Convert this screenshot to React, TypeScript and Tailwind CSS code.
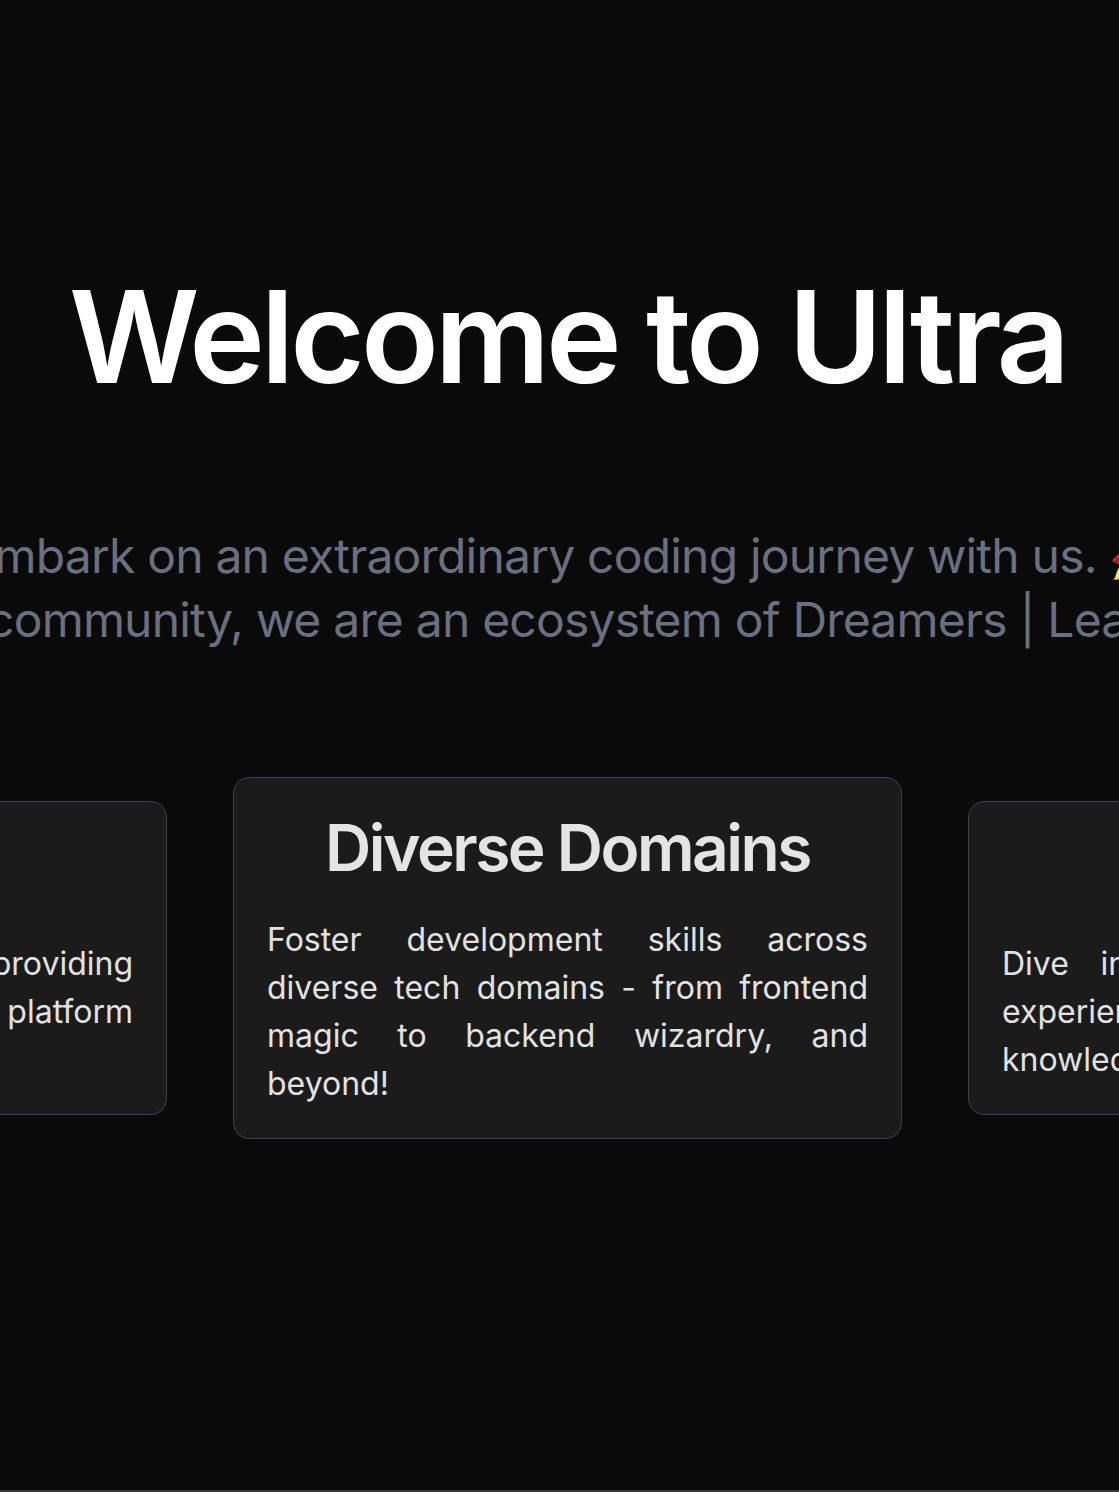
const CARDS = [
  {
    title: "Mentors",
    lines: [
      "Mentors and peers always providing",
      "guidance on a supportive platform",
      "to learn and grow.",
    ],
  },
  {
    title: "Diverse Domains",
    lines: [
      "Foster development skills across",
      "diverse tech domains - from frontend",
      "magic to backend wizardry, and",
      "beyond!",
    ],
  },
  {
    title: "Projects",
    lines: [
      "Dive into real-world projects, gain",
      "experience and share your hard-won",
      "knowledge with others.",
    ],
  },
];

function Card({ title, lines }: { title: string; lines: string[] }) {
  return (
    <div className="w-[669px] shrink-0 rounded-2xl border border-[#3d4049] bg-[#1b1b1b] px-[33px] pt-[38px] pb-[30px]">
      <h2 className="text-center text-[64px] leading-none font-semibold tracking-[-2.5px] text-[#e4e4e4] whitespace-nowrap">
        {title}
      </h2>
      <p className="mt-9 text-[32px] leading-[48px] text-[#e2e2e2]">
        {lines.map((line, i) => (
          <span
            key={i}
            className={
              i < lines.length - 1
                ? "block whitespace-nowrap text-justify [text-align-last:justify]"
                : "block"
            }
          >
            {line}
          </span>
        ))}
      </p>
    </div>
  );
}

export default function App() {
  return (
    <div
      className="min-h-screen w-full overflow-hidden bg-[#0a0a0a]"
      style={{ fontFamily: "Inter, 'Noto Sans', sans-serif" }}
    >
      <section className="flex h-[1490px] w-[1135px] flex-col items-center">
        <h1 className="mt-[273px] text-[128px] leading-none font-semibold tracking-[-4px] text-white whitespace-nowrap">
          Welcome to Ultra
        </h1>

        <div className="mt-[123px] flex flex-col items-center text-[48px] leading-[64px] font-normal tracking-[-0.8px] text-[#6b7080]">
          <p className="whitespace-nowrap">Embark on an extraordinary coding journey with us. 🚀</p>
          <p className="whitespace-nowrap">
            More than just a community, we are an ecosystem of Dreamers | Learners | Innovators
          </p>
        </div>

        <div className="mt-[125px] flex items-center justify-center gap-[66px]">
          {CARDS.map((card) => (
            <Card key={card.title} {...card} />
          ))}
        </div>
      </section>
      <div className="h-[2px] bg-[#3a3a3a]" />
    </div>
  );
}
